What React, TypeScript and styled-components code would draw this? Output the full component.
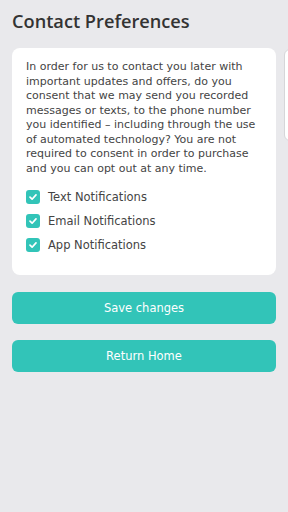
import styled, { createGlobalStyle } from 'styled-components';

const GlobalStyle = createGlobalStyle`
    html, body {
        margin: 0;
        padding: 0;
        background: #e9e9ec;
        font-family: "DejaVu Sans", "Noto Sans", sans-serif;
        color: #3a3a3a;
    }
`;

// the consent copy breaks at fixed places in the design
const consentLines = [
    'In order for us to contact you later with',
    'important updates and offers, do you',
    'consent that we may send you recorded',
    'messages or texts, to the phone number',
    'you identified – including through the use',
    'of automated technology? You are not',
    'required to consent in order to purchase',
    'and you can opt out at any time.',
];

const preferences = ['Text Notifications', 'Email Notifications', 'App Notifications'];

function CheckIcon() {
    return (
        <svg width="10" height="10" viewBox="0 0 10 10" fill="none">
            <path d="M2 5.2 L4.1 7.2 L8 2.9" stroke="#fff" strokeWidth="1.7" strokeLinecap="round" strokeLinejoin="round" />
        </svg>
    );
}

export default function App(): JSX.Element {
    return (
        <Page>
            <GlobalStyle />
            <Title>Contact Preferences</Title>
            <Slider>
                <Card>
                    <Consent>
                        {consentLines.map((line) => (
                            <ConsentLine key={line}>{line}</ConsentLine>
                        ))}
                    </Consent>
                    <CheckList>
                        {preferences.map((label) => (
                            <CheckRow key={label}>
                                <CheckBox><CheckIcon /></CheckBox>
                                <CheckLabel>{label}</CheckLabel>
                            </CheckRow>
                        ))}
                    </CheckList>
                </Card>
                <PeekCard />
            </Slider>
            <Actions>
                <ActionButton>Save changes</ActionButton>
                <ActionButton>Return Home</ActionButton>
            </Actions>
        </Page>
    );
}

const Page = styled.div`
    width: 288px;
    height: 512px;
    overflow: hidden;
    box-sizing: border-box;
    padding: 10px 0 0 12px;
`;

const Title = styled.h1`
    margin: 0 0 16px;
    font-family: "Open Sans", sans-serif;
    font-size: 18.2px;
    font-weight: 600;
    line-height: 22px;
    color: #333;
`;

const Slider = styled.div`
    display: flex;
    align-items: flex-start;
    gap: 8px;
`;

const Card = styled.div`
    flex: 0 0 264px;
    box-sizing: border-box;
    height: 227px;
    background: #fff;
    border-radius: 8px;
    padding: 12px 8px 12px 14px;
`;

const PeekCard = styled.div`
    flex: 0 0 264px;
    height: 92px;
    margin-top: 1px;
    box-sizing: border-box;
    background: #fff;
    border: 1px solid #d6d6d9;
    border-radius: 6px;
`;

const Consent = styled.p`
    margin: 0;
    font-size: 11px;
    line-height: 14.5px;
    color: #444;
`;

const ConsentLine = styled.span`
    display: block;
    white-space: nowrap;
`;

const CheckList = styled.div`
    display: flex;
    flex-direction: column;
    gap: 10px;
    margin-top: 14px;
`;

const CheckRow = styled.div`
    display: flex;
    align-items: center;
    gap: 8px;
    height: 14px;
`;

const CheckBox = styled.span`
    display: flex;
    align-items: center;
    justify-content: center;
    width: 14px;
    height: 14px;
    border-radius: 3px;
    background: #32c4b8;
`;

const CheckLabel = styled.span`
    font-size: 11.5px;
    line-height: 14px;
    color: #444;
`;

const Actions = styled.div`
    display: flex;
    flex-direction: column;
    gap: 16px;
    width: 264px;
    margin-top: 17px;
`;

const ActionButton = styled.button`
    height: 32px;
    border: none;
    border-radius: 6px;
    background: #32c4b8;
    color: #fff;
    font-family: inherit;
    font-size: 11.5px;
    cursor: pointer;
`;
